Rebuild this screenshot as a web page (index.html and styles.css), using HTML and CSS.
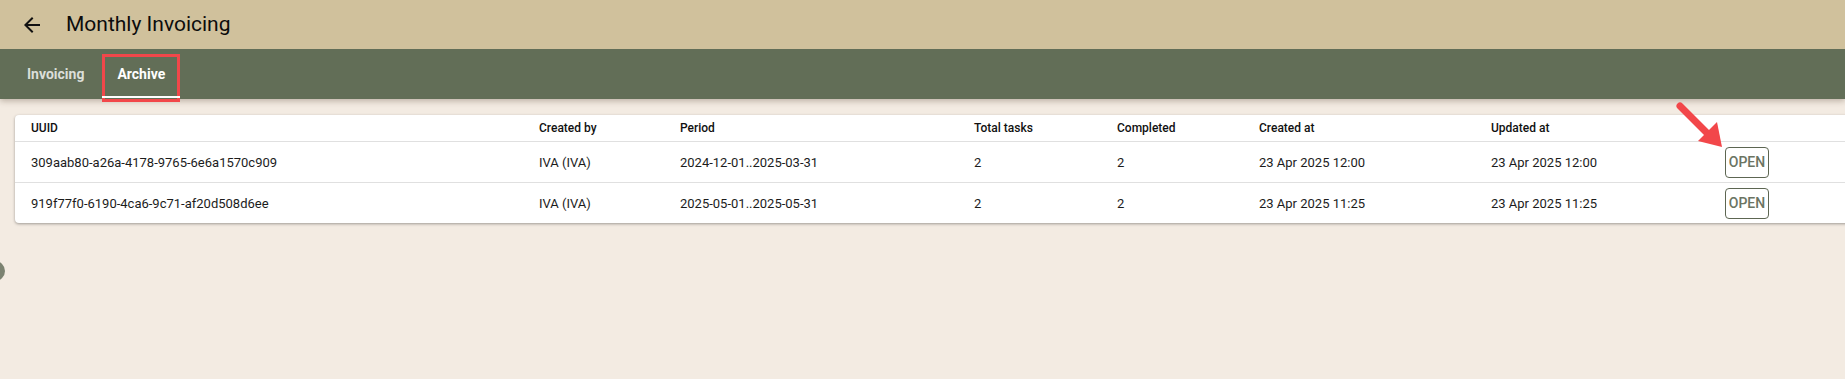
FILE: index.html
```html
<!DOCTYPE html>
<html lang="en">
<head>
    <meta charset="UTF-8">
    <meta name="viewport" content="width=device-width, initial-scale=1.0">
    <title>Monthly Invoicing - Archive</title>
    <link rel="stylesheet" href="styles.css">
</head>
<body>

<div class="bars">
    <div class="appbar">
        <div class="back-button">
            <svg viewBox="0 0 24 24" width="24" height="24"><path d="M20 11H7.83l5.59-5.59L12 4l-8 8 8 8 1.41-1.41L7.83 13H20v-2z"/></svg>
        </div>
        <div class="title">Monthly Invoicing</div>
    </div>
    <div class="tabs">
        <div class="tab">Invoicing</div>
        <div class="tab active">Archive<span class="mark"></span></div>
    </div>
</div>

<div class="content">
    <div class="card">
        <table class="archive">
            <colgroup>
                <col class="c-uuid"><col class="c-by"><col class="c-period"><col class="c-total">
                <col class="c-done"><col class="c-created"><col class="c-updated"><col class="c-action">
            </colgroup>
            <thead>
                <tr>
                    <th>UUID</th>
                    <th>Created by</th>
                    <th>Period</th>
                    <th>Total tasks</th>
                    <th>Completed</th>
                    <th>Created at</th>
                    <th>Updated at</th>
                    <th></th>
                </tr>
            </thead>
            <tbody>
                <tr>
                    <td>309aab80-a26a-4178-9765-6e6a1570c909</td>
                    <td>IVA (IVA)</td>
                    <td>2024-12-01..2025-03-31</td>
                    <td>2</td>
                    <td>2</td>
                    <td>23 Apr 2025 12:00</td>
                    <td>23 Apr 2025 12:00</td>
                    <td><button class="open-btn">OPEN</button></td>
                </tr>
                <tr>
                    <td>919f77f0-6190-4ca6-9c71-af20d508d6ee</td>
                    <td>IVA (IVA)</td>
                    <td>2025-05-01..2025-05-31</td>
                    <td>2</td>
                    <td>2</td>
                    <td>23 Apr 2025 11:25</td>
                    <td>23 Apr 2025 11:25</td>
                    <td><button class="open-btn">OPEN</button></td>
                </tr>
            </tbody>
        </table>
    </div>
</div>

<div class="side-knob"></div>

<svg class="pointer" width="60" height="60" viewBox="0 0 60 60">
    <line x1="10" y1="10" x2="40" y2="40" stroke="#f2474a" stroke-width="7" stroke-linecap="round"/>
    <polygon points="52,51 28,45 47,26" fill="#f2474a"/>
</svg>

</body>
</html>
```

FILE: styles.css
```css
body {
    font-family: Roboto, "Liberation Sans", sans-serif;
    background-color: #f3ebe2;
    color: #1c1c1c;
    margin: 0;
    padding: 0;
    height: 379px;
    overflow: hidden;
}
.bars {
    position: relative;
    z-index: 2;
    box-shadow: 0 2px 6px rgba(60,40,20,0.3);
}
.appbar {
    background-color: #d0c19c;
    height: 49px;
    display: flex;
    align-items: center;
    padding-left: 20px;
}
.back-button {
    width: 24px;
    height: 24px;
    cursor: pointer;
}
.back-button svg {
    display: block;
    fill: #111;
}
.title {
    margin-left: 22px;
    font-size: 21px;
    color: #0c0c0c;
    padding-bottom: 1px;
}
.tabs {
    background-color: #626e57;
    height: 50px;
    display: flex;
    gap: 2px;
    padding-left: 11px;
}
.tab {
    position: relative;
    display: flex;
    align-items: center;
    padding: 0 16px;
    font-size: 14px;
    font-weight: 700;
    color: rgba(255,255,255,0.78);
}
.tab.active {
    color: #fff;
    padding: 0 15px;
}
.tab.active::after {
    content: "";
    position: absolute;
    left: 0;
    right: 0;
    bottom: 1px;
    height: 2px;
    background-color: #fff;
}
.tab .mark {
    position: absolute;
    left: 0;
    right: 0;
    top: 5px;
    bottom: -3px;
    border: 3px solid #f2474a;
}
.content {
    padding: 16px 0 20px 15px;
    overflow: hidden;
}
.card {
    width: 1874px;
    background-color: #fff;
    border-radius: 4px;
    box-shadow: 0 1px 3px rgba(0,0,0,0.35);
}
.archive {
    width: 1874px;
    table-layout: fixed;
    border-collapse: collapse;
}
.c-uuid { width: 508px; }
.c-by { width: 141px; }
.c-period { width: 294px; }
.c-total { width: 143px; }
.c-done { width: 142px; }
.c-created { width: 232px; }
.c-updated { width: 234px; }
.c-action { width: 180px; }
.archive th {
    height: 26px;
    padding: 0 16px;
    text-align: left;
    font-size: 12px;
    font-weight: 500;
    color: #111;
    border-bottom: 1px solid #e0e0e0;
}
.archive td {
    height: 40px;
    padding: 0 16px;
    font-size: 13px;
    color: #1c1c1c;
    border-bottom: 1px solid #e0e0e0;
}
.archive tbody tr:last-child td {
    border-bottom: none;
}
.open-btn {
    display: block;
    width: 42px;
    height: 29px;
    padding: 0;
    box-sizing: content-box;
    border: 1px solid #5d6652;
    border-radius: 4px;
    background: #fff;
    color: #6b7462;
    font-family: Roboto, "Liberation Sans", sans-serif;
    font-size: 14px;
    font-weight: 500;
    cursor: pointer;
}
.side-knob {
    position: absolute;
    left: -15px;
    top: 261px;
    width: 20px;
    height: 20px;
    border-radius: 50%;
    background-color: #7b8271;
}
.pointer {
    position: absolute;
    left: 1670px;
    top: 96px;
    z-index: 3;
}
```
